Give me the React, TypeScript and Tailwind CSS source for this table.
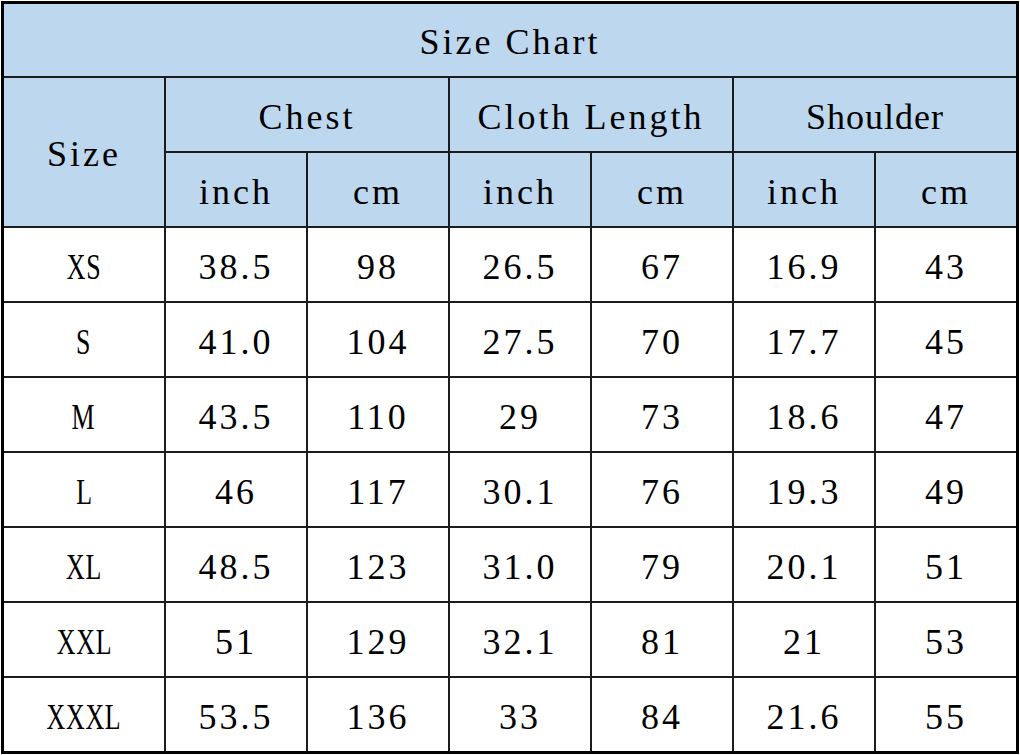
const rows: string[][] = [
  ["XS", "38.5", "98", "26.5", "67", "16.9", "43"],
  ["S", "41.0", "104", "27.5", "70", "17.7", "45"],
  ["M", "43.5", "110", "29", "73", "18.6", "47"],
  ["L", "46", "117", "30.1", "76", "19.3", "49"],
  ["XL", "48.5", "123", "31.0", "79", "20.1", "51"],
  ["XXL", "51", "129", "32.1", "81", "21", "53"],
  ["XXXL", "53.5", "136", "33", "84", "21.6", "55"],
];

const head = "bg-[#bdd7ee] flex items-center justify-center pt-[4px]";
const cell = "bg-white flex items-center justify-center pt-[4px]";

export default function App() {
  return (
    <div className="w-[1020px] h-[755px] bg-white pt-[1px] pl-[1px]">
      <div
        className="w-[1018px] h-[753px] border-[3px] border-black text-[36px] text-black tracking-[3px]"
        style={{ fontFamily: '"Liberation Serif", "Times New Roman", serif' }}
      >
        <div className="grid grid-cols-[160px_repeat(6,140px)] grid-rows-[72px_repeat(9,73px)] gap-[2px] bg-[#1c1c1c] w-full h-full">
          <div className={`${head} col-span-7`}>Size Chart</div>
          <div className={`${head} row-span-2`}>Size</div>
          <div className={`${head} col-span-2`}>Chest</div>
          <div className={`${head} col-span-2`}>Cloth Length</div>
          <div className={`${head} col-span-2`}>
            <span className="tracking-[1px]">Shoulder</span>
          </div>
          {["inch", "cm", "inch", "cm", "inch", "cm"].map((u, i) => (
            <div key={i} className={head}>
              {u}
            </div>
          ))}
          {rows.map((r) =>
            r.map((v, i) => (
              <div key={r[0] + i} className={cell}>
                {i === 0 ? (
                  <span className="inline-block scale-x-[0.72] tracking-[1px]">{v}</span>
                ) : (
                  v
                )}
              </div>
            ))
          )}
        </div>
      </div>
    </div>
  );
}
